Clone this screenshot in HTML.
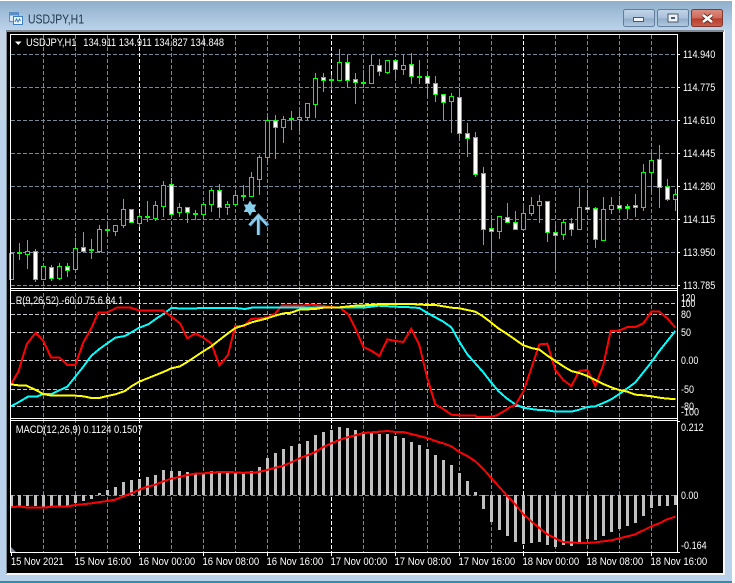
<!DOCTYPE html>
<html><head><meta charset="utf-8"><style>
html,body{margin:0;padding:0;background:#fff;width:735px;height:583px;overflow:hidden}
svg{display:block}
text{font-family:"Liberation Sans",sans-serif;font-size:11.2px;fill:#fff}
</style></head><body>
<svg width="735" height="583" viewBox="0 0 735 583" xmlns="http://www.w3.org/2000/svg">
<defs>
<linearGradient id="tb" x1="0" y1="0" x2="0" y2="1"><stop offset="0" stop-color="#8fafcc"/><stop offset="1" stop-color="#bdd4eb"/></linearGradient>
<linearGradient id="btn" x1="0" y1="0" x2="0" y2="1"><stop offset="0" stop-color="#c3d5e8"/><stop offset=".5" stop-color="#a9c0d9"/><stop offset=".55" stop-color="#92adc9"/><stop offset="1" stop-color="#b4cae0"/></linearGradient>
<linearGradient id="cls" x1="0" y1="0" x2="0" y2="1"><stop offset="0" stop-color="#dc8e80"/><stop offset=".5" stop-color="#cf6a5a"/><stop offset=".55" stop-color="#b83c2a"/><stop offset="1" stop-color="#c8604e"/></linearGradient>
</defs>
<!-- window chrome -->
<rect width="735" height="583" fill="#fff"/>
<rect x="0" y="1" width="732" height="582" fill="#b9d1ea"/>
<rect x="0" y="1" width="732" height="30" fill="url(#tb)"/>
<rect x="0" y="31" width="7" height="89" fill="#c4d6e8"/>
<rect x="0" y="581" width="732" height="2" fill="#2f8ea8"/>
<rect x="6" y="30" width="719" height="545" fill="#f4f7fa"/>
<rect x="6" y="30" width="718" height="2" fill="#7f8a94"/>
<rect x="6" y="30" width="1" height="544" fill="#7f8a94"/>
<rect x="7" y="32" width="716" height="541" fill="#000"/>
<!-- title icon -->
<rect x="9.5" y="12.5" width="9" height="9" fill="#d8e8f6" stroke="#5b8fc4"/>
<rect x="9.5" y="12.5" width="9" height="3" fill="#5b8fc4"/>
<rect x="13.5" y="16.5" width="9" height="8" fill="#eef5fb" stroke="#3f7fbf"/>
<path d="M15 22l1.5-3 1.5 3 1.5-3 1 2" fill="none" stroke="#3f7fbf"/>
<text x="28" y="23.5" textLength="56" lengthAdjust="spacingAndGlyphs" style="font-size:13px;fill:#20384e">USDJPY,H1</text>
<!-- buttons -->
<rect x="623.5" y="9.5" width="31" height="17" rx="2" fill="url(#btn)" stroke="#5f7d9c"/>
<rect x="633.5" y="17.5" width="10" height="4" fill="#f2f6fa" stroke="#4a5a6c"/>
<rect x="657.5" y="9.5" width="31" height="17" rx="2" fill="url(#btn)" stroke="#5f7d9c"/>
<rect x="668" y="14" width="10" height="8" fill="#eef3f8" stroke="#4a5a6c"/>
<rect x="671" y="17" width="4" height="2" fill="#4a5a6c"/>
<rect x="691.5" y="9.5" width="31" height="17" rx="2" fill="url(#cls)" stroke="#7d3a32"/>
<path d="M703 15l9 7M712 15l-9 7" stroke="#5a2a24" stroke-width="4.4"/>
<path d="M703 15l9 7M712 15l-9 7" stroke="#fff" stroke-width="2.6"/>
<!-- grid -->
<g shape-rendering="crispEdges" fill="none">
<path stroke="#778899" stroke-dasharray="4 2" d="M11 54.5H677M11 87.5H677M11 120.5H677M11 153.5H677M11 186.5H677M11 219.5H677M11 252.5H677M11 285.5H677"/>
<path stroke="#c4c8cc" stroke-dasharray="4 2" d="M11 303.5H677M11 314.5H677M11 332.5H677M11 360.5H677M11 389.5H677M11 406.5H677"/>
<path stroke="#778899" stroke-dasharray="4 2" d="M11 495.5H677"/>
<path stroke="#778899" stroke-dasharray="4 2" d="M43.5 35V552M75.5 35V552M107.5 35V552M171.5 35V552M203.5 35V552M235.5 35V552M267.5 35V552M299.5 35V552M363.5 35V552M395.5 35V552M427.5 35V552M459.5 35V552M491.5 35V552M555.5 35V552M587.5 35V552M619.5 35V552M651.5 35V552"/>
<path stroke="#fff" stroke-dasharray="4 2" d="M139.5 35V552M331.5 35V552M523.5 35V552"/>
</g>
<!-- macd bars -->
<path shape-rendering="crispEdges" fill="none" stroke="#c0c0c0" stroke-width="3" d="M11.5 495V508M19.5 495V506M27.5 495V506M35.5 495V506M43.5 495V507M51.5 495V507M59.5 495V506M67.5 495V506M75.5 495V503M83.5 495V501M91.5 495V499M99.5 495V493M107.5 495V490M115.5 495V487M123.5 495V482M131.5 495V480M139.5 495V479M147.5 495V477M155.5 495V475M163.5 495V470M171.5 495V471M179.5 495V471M187.5 495V472M195.5 495V474M203.5 495V473M211.5 495V471M219.5 495V472M227.5 495V473M235.5 495V473M243.5 495V472M251.5 495V471M259.5 495V467M267.5 495V458M275.5 495V453M283.5 495V449M291.5 495V446M299.5 495V444M307.5 495V441M315.5 495V435M323.5 495V432M331.5 495V430M339.5 495V427M347.5 495V428M355.5 495V430M363.5 495V432M371.5 495V433M379.5 495V434M387.5 495V434M395.5 495V436M403.5 495V438M411.5 495V442M419.5 495V445M427.5 495V449M435.5 495V455M443.5 495V460M451.5 495V465M459.5 495V473M467.5 495V481M475.5 495V492M483.5 495V509M491.5 495V522M499.5 495V530M507.5 495V536M515.5 495V542M523.5 495V544M531.5 495V543M539.5 495V542M547.5 495V545M555.5 495V547M563.5 495V545M571.5 495V546M579.5 495V542M587.5 495V539M595.5 495V540M603.5 495V536M611.5 495V532M619.5 495V529M627.5 495V526M635.5 495V523M643.5 495V516M651.5 495V508M659.5 495V506M667.5 495V506M675.5 495V505"/>
<!-- candle wicks -->
<path shape-rendering="crispEdges" fill="none" stroke="#00ff00" d="M11.5 252V280M19.5 243V260M27.5 240V269M35.5 249V282M43.5 266V279M51.5 265V281M59.5 263V280M67.5 263V277M75.5 238V271M83.5 232V253M91.5 239V259M99.5 225V253M107.5 225V236M115.5 225V236M123.5 199V228M131.5 209V222M139.5 213V227M147.5 201V222M155.5 201V221M163.5 181V217M171.5 178V217M179.5 203V217M187.5 207V223M195.5 210V220M203.5 202V220M211.5 188V212M219.5 184V218M227.5 201V215M235.5 190V204M243.5 185V201M251.5 172V196M259.5 155V195M267.5 117V162M275.5 115V159M283.5 116V143M291.5 111V130M299.5 111V131M307.5 103V120M315.5 73V118M323.5 73V92M331.5 75V90M339.5 49V80M347.5 55V88M355.5 73V104M363.5 70V88M371.5 55V83M379.5 59V76M387.5 60V74M395.5 59V79M403.5 55V75M411.5 53V84M419.5 60V84M427.5 74V97M435.5 76V102M443.5 94V120M451.5 93V133M459.5 88V138M467.5 123V157M475.5 132V177M483.5 167V245M491.5 219V258M499.5 216V239M507.5 203V222M515.5 211V229M523.5 203V231M531.5 197V216M539.5 195V223M547.5 201V242M555.5 225V270M563.5 219V240M571.5 218V236M579.5 188V230M587.5 190V213M595.5 207V248M603.5 197V240M611.5 197V214M619.5 196V210M627.5 204V219M635.5 194V217M643.5 164V211M651.5 153V192M659.5 145V208M667.5 179V201M675.5 189V211"/>
<!-- hollow bodies -->
<path shape-rendering="crispEdges" fill="#000" stroke="#00ff00" d="M9.5 253.5H13.5V279.5H9.5ZM25.5 251.5H29.5V254.5H25.5ZM41.5 266.5H45.5V279.5H41.5ZM57.5 266.5H61.5V278.5H57.5ZM73.5 248.5H77.5V269.5H73.5ZM97.5 229.5H101.5V251.5H97.5ZM113.5 225.5H117.5V231.5H113.5ZM121.5 209.5H125.5V225.5H121.5ZM137.5 216.5H141.5V223.5H137.5ZM153.5 205.5H157.5V218.5H153.5ZM161.5 185.5H165.5V206.5H161.5ZM177.5 207.5H181.5V212.5H177.5ZM201.5 204.5H205.5V214.5H201.5ZM209.5 190.5H213.5V204.5H209.5ZM225.5 204.5H229.5V207.5H225.5ZM233.5 195.5H237.5V204.5H233.5ZM249.5 177.5H253.5V196.5H249.5ZM257.5 157.5H261.5V179.5H257.5ZM265.5 120.5H269.5V157.5H265.5ZM281.5 119.5H285.5V127.5H281.5ZM297.5 117.5H301.5V119.5H297.5ZM305.5 103.5H309.5V117.5H305.5ZM313.5 78.5H317.5V104.5H313.5ZM337.5 62.5H341.5V80.5H337.5ZM369.5 65.5H373.5V83.5H369.5ZM385.5 60.5H389.5V72.5H385.5ZM401.5 65.5H405.5V69.5H401.5ZM449.5 96.5H453.5V101.5H449.5ZM497.5 216.5H501.5V231.5H497.5ZM521.5 213.5H525.5V229.5H521.5ZM529.5 205.5H533.5V213.5H529.5ZM537.5 201.5H541.5V205.5H537.5ZM561.5 222.5H565.5V234.5H561.5ZM577.5 207.5H581.5V229.5H577.5ZM601.5 209.5H605.5V240.5H601.5ZM609.5 205.5H613.5V209.5H609.5ZM641.5 172.5H645.5V207.5H641.5ZM649.5 160.5H653.5V172.5H649.5ZM673.5 194.5H677.5V199.5H673.5Z"/>
<!-- white bodies -->
<path shape-rendering="crispEdges" fill="#fff" stroke="#00ff00" d="M33.5 251.5H37.5V279.5H33.5ZM49.5 267.5H53.5V278.5H49.5ZM65.5 266.5H69.5V270.5H65.5ZM81.5 247.5H85.5V251.5H81.5ZM129.5 209.5H133.5V222.5H129.5ZM169.5 184.5H173.5V214.5H169.5ZM185.5 207.5H189.5V212.5H185.5ZM217.5 190.5H221.5V207.5H217.5ZM273.5 120.5H277.5V127.5H273.5ZM321.5 77.5H325.5V80.5H321.5ZM345.5 62.5H349.5V80.5H345.5ZM353.5 79.5H357.5V82.5H353.5ZM377.5 65.5H381.5V71.5H377.5ZM393.5 60.5H397.5V69.5H393.5ZM409.5 64.5H413.5V76.5H409.5ZM425.5 76.5H429.5V83.5H425.5ZM433.5 83.5H437.5V94.5H433.5ZM441.5 94.5H445.5V102.5H441.5ZM457.5 97.5H461.5V133.5H457.5ZM465.5 133.5H469.5V138.5H465.5ZM473.5 137.5H477.5V174.5H473.5ZM481.5 173.5H485.5V229.5H481.5ZM489.5 228.5H493.5V231.5H489.5ZM505.5 217.5H509.5V222.5H505.5ZM513.5 222.5H517.5V229.5H513.5ZM545.5 201.5H549.5V232.5H545.5ZM553.5 232.5H557.5V235.5H553.5ZM569.5 223.5H573.5V229.5H569.5ZM585.5 207.5H589.5V209.5H585.5ZM593.5 208.5H597.5V239.5H593.5ZM617.5 205.5H621.5V208.5H617.5ZM625.5 206.5H629.5V208.5H625.5ZM633.5 205.5H637.5V207.5H633.5ZM657.5 159.5H661.5V187.5H657.5ZM665.5 186.5H669.5V199.5H665.5Z"/>
<!-- doji -->
<path shape-rendering="crispEdges" fill="none" stroke="#00ff00" stroke-width="2" d="M17 253H22M89 250H94M105 230H110M145 217H150M193 214H198M241 196H246M289 119H294M329 80H334M361 83H366M417 77H422"/>
<!-- markers -->
<path fill="#87ceeb" d="M250 200.5L256.3 212H243.7Z"/>
<path fill="#87ceeb" d="M250 216L243.7 204.5H256.3Z"/>
<path fill="none" stroke="#5a9cc8" stroke-width="3.4" d="M249.5 225.5L258.5 215.5L268 225.5M258.5 216V235"/>
<path fill="none" stroke="#8fd0f0" stroke-width="2" d="M249.5 225L258.3 215.5L267 225M258 216V235"/>
<!-- rsi lines -->
<g fill="none" stroke-width="6" stroke-linejoin="miter" shape-rendering="crispEdges">
<g transform="translate(0 285) scale(.33333)">
<polyline stroke="#00ffff" points="33,364 55,352 84,335 110,335 130,327 155,327 180,315 202,305 226,275 250,245 274,212 298,192 322,175 346,158 375,153 394,142 418,128 445,118 470,100 490,87 514,69 562,71 610,69 706,69 735,72"/>
<polyline stroke="#ff0000" points="33,298 55,260 80,178 107,143 130,168 153,217 178,217 202,240 226,240 250,172 274,130 295,82 322,82 350,68 392,68 418,77 490,77 514,95 540,115 562,160 586,145 610,158 634,175 658,241 684,210 706,123 735,123"/>
<polyline stroke="#ffff00" points="33,298 55,301 80,302 107,315 130,327 155,332 226,332 250,334 274,339 298,339 322,333 346,328 375,318 394,304 418,290 445,279 470,269 490,261 514,250 540,244 562,231 586,215 610,199 634,184 658,165 684,145 706,129 735,120"/>
</g>
<g transform="translate(245 285) scale(.33333)">
<polyline stroke="#ff0000" points="0,120 18,102 43,100 67,97 91,85 110,62 163,62 200,59 235,63 259,66 285,68 310,88 331,130 355,186 379,197 403,213 427,163 451,168 475,171 499,131 523,180 547,280 571,358 595,372 619,389 643,391 691,392 695,396 735,396"/>
<polyline stroke="#00ffff" points="0,72 20,68 355,68 379,65 400,62 451,65 499,67 523,69 547,84 571,97 595,110 619,127 643,170 667,208 691,235 715,262 735,288"/>
<polyline stroke="#ffff00" points="0,120 20,112 43,106 67,100 91,92 115,85 139,83 163,74 211,72 235,68 283,67 331,62 379,60 403,57 499,57 547,60 571,60 595,64 619,68 643,70 667,75 691,80 711,92 735,110"/>
</g>
<g transform="translate(490 285) scale(.33333)">
<polyline stroke="#00ffff" points="0,288 25,318 50,340 76,358 100,368 136,374 172,376 196,380 244,380 268,374 292,366 316,364 340,354 364,343 388,327 412,310 436,292 460,262 484,232 508,198 532,168 556,138"/>
<polyline stroke="#ff0000" points="0,396 20,391 43,378 60,366 76,360 100,320 124,250 148,178 172,176 196,255 220,285 244,303 268,258 292,255 316,303 340,240 362,138 388,137 412,126 436,126 460,115 484,80 508,80 532,100 556,128"/>
<polyline stroke="#ffff00" points="0,110 25,130 50,146 76,164 100,181 124,189 148,194 172,212 196,228 220,244 244,258 268,264 292,273 316,285 340,297 364,307 388,315 412,320 436,329 460,331 484,334 508,338 532,341 556,342"/>
</g>
<!-- macd signal -->
<g stroke="#ff0000">
<polyline transform="translate(0 420) scale(.33333)" points="33,262 58,259 82,263 130,263 155,260 202,259 226,255 274,250 322,243 346,239 370,229 394,220 418,209 442,200 466,194 490,184 514,176 538,171 562,165 586,161 610,160 634,158 658,156 682,156 706,157 735,159"/>
<polyline transform="translate(245 420) scale(.33333)" points="0,158 28,158 55,153 91,143 115,137 139,127 163,115 187,106 211,96 235,81 259,70 283,60 307,52 331,46 355,39 379,37 403,35 427,33 451,36 475,36 499,42 523,48 547,54 571,63 595,70 619,79 643,96 667,108 691,124 715,147 735,170"/>
<polyline transform="translate(490 420) scale(.33333)" points="0,170 28,201 52,228 76,253 100,283 124,304 148,324 172,343 196,355 220,366 244,367 268,369 292,369 316,367 340,364 364,361 388,355 412,349 436,343 460,331 484,319 508,310 532,298 556,290"/>
</g>
</g>
<!-- small triangle -->
<path d="M11 547L16 552H11Z" fill="#778899"/>
<!-- frames -->
<g shape-rendering="crispEdges" fill="none" stroke="#fff">
<path d="M10.5 34.5H677.5V552.5H10.5Z"/>
<path d="M10 288.5H678M10 290.5H678M10 418.5H678M10 420.5H678"/>
<path d="M677 54.5h3M677 87.5h3M677 120.5h3M677 153.5h3M677 186.5h3M677 219.5h3M677 252.5h3M677 285.5h3M677 421.5h3M677 552.5h3"/>
<path d="M11.5 553v3M75.5 553v3M139.5 553v3M203.5 553v3M267.5 553v3M331.5 553v3M395.5 553v3M459.5 553v3M523.5 553v3M587.5 553v3M651.5 553v3"/>
</g>
<!-- legends -->
<path d="M15 41.5h6.5l-3.2 3.5Z" fill="#fff"/>
<text x="26" y="46" textLength="50.5" lengthAdjust="spacingAndGlyphs">USDJPY,H1</text>
<text x="83.3" y="46" textLength="140.7" lengthAdjust="spacingAndGlyphs">134.911 134.911 134.827 134.848</text>
<text x="15.7" y="304" textLength="107.5" lengthAdjust="spacingAndGlyphs">R(9,26,52) -60.0 75.6 84.1</text>
<text x="15.7" y="433" textLength="127" lengthAdjust="spacingAndGlyphs">MACD(12,26,9) 0.1124 0.1507</text>
<!-- price labels -->
<g>
<text x="683" y="58" textLength="32.3" lengthAdjust="spacingAndGlyphs">114.940</text>
<text x="683" y="91" textLength="32.3" lengthAdjust="spacingAndGlyphs">114.775</text>
<text x="683" y="124" textLength="32.3" lengthAdjust="spacingAndGlyphs">114.610</text>
<text x="683" y="157" textLength="32.3" lengthAdjust="spacingAndGlyphs">114.445</text>
<text x="683" y="190" textLength="32.3" lengthAdjust="spacingAndGlyphs">114.280</text>
<text x="683" y="223" textLength="32.3" lengthAdjust="spacingAndGlyphs">114.115</text>
<text x="683" y="256" textLength="32.3" lengthAdjust="spacingAndGlyphs">113.950</text>
<text x="683" y="289" textLength="32.3" lengthAdjust="spacingAndGlyphs">113.785</text>
<text x="681" y="301.5" textLength="14.3" lengthAdjust="spacingAndGlyphs">120</text>
<text x="681" y="307" textLength="14.3" lengthAdjust="spacingAndGlyphs">100</text>
<text x="681" y="318" textLength="10" lengthAdjust="spacingAndGlyphs">80</text>
<text x="681" y="336" textLength="10" lengthAdjust="spacingAndGlyphs">50</text>
<text x="681" y="364" textLength="17.3" lengthAdjust="spacingAndGlyphs">0.00</text>
<text x="681" y="393" textLength="13" lengthAdjust="spacingAndGlyphs">-50</text>
<text x="681" y="410" textLength="13" lengthAdjust="spacingAndGlyphs">-80</text>
<text x="681" y="415.5" textLength="18" lengthAdjust="spacingAndGlyphs">-100</text>
<text x="681" y="431" textLength="22.7" lengthAdjust="spacingAndGlyphs">0.212</text>
<text x="681" y="499" textLength="17.3" lengthAdjust="spacingAndGlyphs">0.00</text>
<text x="681" y="549" textLength="25.7" lengthAdjust="spacingAndGlyphs">-0.164</text>
</g>
<!-- time labels -->
<g>
<text x="11" y="565" textLength="52.7" lengthAdjust="spacingAndGlyphs">15 Nov 2021</text>
<text x="74.5" y="565" textLength="56.7" lengthAdjust="spacingAndGlyphs">15 Nov 16:00</text>
<text x="138.5" y="565" textLength="56.7" lengthAdjust="spacingAndGlyphs">16 Nov 00:00</text>
<text x="202.5" y="565" textLength="56.7" lengthAdjust="spacingAndGlyphs">16 Nov 08:00</text>
<text x="266.5" y="565" textLength="56.7" lengthAdjust="spacingAndGlyphs">16 Nov 16:00</text>
<text x="330.5" y="565" textLength="56.7" lengthAdjust="spacingAndGlyphs">17 Nov 00:00</text>
<text x="394.5" y="565" textLength="56.7" lengthAdjust="spacingAndGlyphs">17 Nov 08:00</text>
<text x="458.5" y="565" textLength="56.7" lengthAdjust="spacingAndGlyphs">17 Nov 16:00</text>
<text x="522.5" y="565" textLength="56.7" lengthAdjust="spacingAndGlyphs">18 Nov 00:00</text>
<text x="586.5" y="565" textLength="56.7" lengthAdjust="spacingAndGlyphs">18 Nov 08:00</text>
<text x="650.5" y="565" textLength="56.7" lengthAdjust="spacingAndGlyphs">18 Nov 16:00</text>
</g>
</svg>
</body></html>
